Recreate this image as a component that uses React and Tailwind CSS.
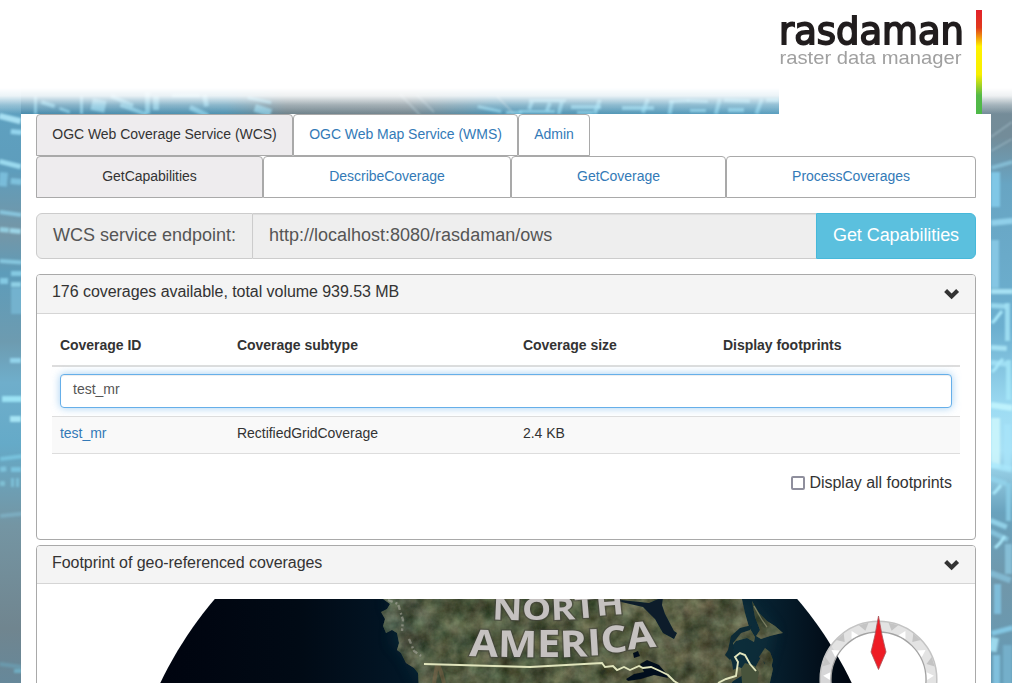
import React from "react";

const tabBase =
  "flex h-[42px] items-center justify-center rounded-t border border-[#a9a9a9] pb-[2px] text-sm leading-5 tracking-[-0.03px]";

function Tab({ width, active, children }) {
  return (
    <a className={`${tabBase} ${width} ${active ? "bg-[#eeecee] text-[#333]" : "bg-white text-[#337ab7]"}`}>
      {children}
    </a>
  );
}

function Chevron() {
  return (
    <svg className="block h-[12px] w-[16px]" viewBox="0 0 16 12">
      <path d="M1.6 2.6 7.6 8.4 13.6 2.6" fill="none" stroke="#333" strokeWidth="4.2" />
    </svg>
  );
}

const leftBars = [
  [0, 113, 22, 6, 14, "#b9efff"], [11, 129, 11, 5, 5, "#a1e2fa"], [0, 159, 22, 5, 14, "#a9e8fb"],
  [0, 172, 8, 14, 5, "#7fc4e2"], [11, 178, 11, 6, 5, "#86cbe6"], [0, 210, 22, 4, 8, "#8dcfe8"],
  [0, 227, 9, 5, 5, "#9bdbee"], [10, 228, 11, 5, 5, "#a6e4f6"], [0, 259, 22, 4, 4, "#8fd2ea"],
  [0, 278, 8, 6, 0, "#8dd5ee"], [11, 271, 11, 5, 0, "#8ed4ec"], [11, 282, 10, 5, 0, "#9adcf0"],
  [11, 288, 11, 26, 0, "#78b8d4"], [10, 358, 11, 5, 0, "#9cdff6"],
  [2, 396, 20, 6, 0, "#a8effe"], [10, 416, 11, 6, 0, "#b5f3ff"], [0, 457, 22, 4, -7, "#7cc9e4"],
  [0, 467, 6, 5, -7, "#84cbe3"], [11, 467, 10, 5, 0, "#80cbe5"], [0, 481, 5, 5, 0, "#83c5da"],
  [11, 478, 3, 9, 0, "#7fc5de"], [16, 478, 3, 9, 0, "#7fc5de"], [0, 514, 22, 4, -6, "#7eb2c5"],
  [0, 662, 22, 4, 8, "#6b9eb2"], [14, 669, 8, 4, 0, "#72b5cc"],
];

const rightBars = [
  [991, 172, 9, 35, 0, "#86d0ef"], [991, 166, 22, 4, -16, "#8bc4dc"], [991, 220, 22, 6, -6, "#9ad9f3"],
  [991, 240, 8, 48, 0, "#8ccdea"], [991, 289, 22, 5, 0, "#b5edfc"], [991, 303, 16, 5, 4, "#a2e1f5"],
  [1005, 303, 5, 38, 0, "#a6e6f8"], [991, 345, 16, 5, 4, "#b0ebfa"], [991, 360, 16, 5, 6, "#a6e5f7"],
  [1006, 360, 5, 40, 0, "#a7e8f9"], [991, 402, 22, 6, 8, "#c7f7ff"], [991, 418, 9, 50, 0, "#d0f8fd"],
  [1004, 424, 7, 45, 0, "#a8e4f9"], [991, 462, 22, 6, 12, "#a9e7fb"], [991, 476, 17, 5, 18, "#93d4ec"],
  [1006, 483, 5, 38, 0, "#8ccfe8"], [991, 518, 18, 5, 22, "#9bdcf2"], [991, 529, 20, 5, 25, "#8bc9e2"],
  [1005, 544, 7, 30, 0, "#8cc7df"], [991, 570, 22, 6, 20, "#87c0d9"], [994, 584, 7, 30, 0, "#83c7e5"],
  [991, 631, 22, 5, -15, "#8bd2ef"], [991, 637, 8, 14, 10, "#a9e8fb"], [993, 655, 7, 30, 0, "#87c9e7"],
  [1003, 645, 9, 40, 0, "#78b4d0"],
];

const topBars = [
  [34, 96, 3, 18, 0], [42, 100, 14, 4, 18], [60, 107, 11, 3, 20], [80, 96, 3, 18, 0], [93, 98, 14, 12, 12],
  [112, 94, 24, 4, 24], [121, 103, 28, 4, 20], [145, 92, 5, 22, 0], [153, 96, 6, 14, 0], [172, 94, 28, 3, 0],
  [191, 105, 20, 5, 25], [202, 95, 5, 12, -10], [248, 96, 24, 3, 12], [256, 104, 17, 8, 18],
  [478, 105, 24, 3, 12], [506, 111, 16, 3, 0], [529, 99, 37, 3, 0], [530, 101, 4, 8, 20],
  [548, 102, 4, 9, 20], [560, 101, 4, 13, 15], [519, 110, 36, 3, 0], [571, 105, 30, 4, 0],
  [598, 99, 4, 15, 20], [577, 111, 16, 3, 0], [622, 106, 32, 4, 0], [646, 98, 4, 15, 20],
  [669, 100, 20, 3, -3], [670, 100, 4, 14, 10], [687, 99, 21, 3, 3], [690, 109, 16, 3, 0],
  [718, 98, 4, 16, 15], [724, 98, 26, 4, 2], [728, 108, 16, 4, 0], [760, 98, 4, 16, 20], [766, 98, 13, 4, 0],
];

function Backdrop() {
  return (
    <svg className="absolute left-0 top-0 h-[683px] w-[1012px]" viewBox="0 0 1012 683">
      <defs>
        <linearGradient id="bgLeft" x1="0" y1="0" x2="0" y2="1">
          <stop offset="0" stopColor="#5fa6c6" />
          <stop offset=".25" stopColor="#5e9dbc" />
          <stop offset=".34" stopColor="#7596a6" />
          <stop offset=".4" stopColor="#5d9cba" />
          <stop offset=".5" stopColor="#6d9bb0" />
          <stop offset=".56" stopColor="#6faecb" />
          <stop offset=".65" stopColor="#65aac8" />
          <stop offset=".77" stopColor="#7495a3" />
          <stop offset=".92" stopColor="#70858f" />
          <stop offset="1" stopColor="#66889a" />
        </linearGradient>
        <linearGradient id="bgRight" x1="0" y1="0" x2="0" y2="1">
          <stop offset="0" stopColor="#7b8c96" />
          <stop offset=".2" stopColor="#738c99" />
          <stop offset=".27" stopColor="#68a5c3" />
          <stop offset=".48" stopColor="#6cafcf" />
          <stop offset=".6" stopColor="#9edcf3" />
          <stop offset=".66" stopColor="#a8e1f6" />
          <stop offset=".75" stopColor="#69a2bd" />
          <stop offset=".86" stopColor="#7097aa" />
          <stop offset="1" stopColor="#649bb6" />
        </linearGradient>
        <linearGradient id="bgTop" x1="0" y1="0" x2="1" y2="0">
          <stop offset="0" stopColor="#4a8cad" />
          <stop offset=".27" stopColor="#4f92b1" />
          <stop offset=".35" stopColor="#70838c" />
          <stop offset=".51" stopColor="#758790" />
          <stop offset=".62" stopColor="#4f92b1" />
          <stop offset="1" stopColor="#5a9fbf" />
        </linearGradient>
        <linearGradient id="fade" x1="0" y1="0" x2="0" y2="1">
          <stop offset="0" stopColor="#fff" />
          <stop offset=".3" stopColor="#fff" stopOpacity=".88" />
          <stop offset=".65" stopColor="#fff" stopOpacity=".35" />
          <stop offset="1" stopColor="#fff" stopOpacity="0" />
        </linearGradient>
        <filter id="soften"><feGaussianBlur stdDeviation=".9" /></filter>
      </defs>
      <rect width="25" height="683" fill="url(#bgLeft)" />
      <rect x="976" width="36" height="683" fill="url(#bgRight)" />
      <rect x="21" y="80" width="758" height="34" fill="url(#bgTop)" />
      <g filter="url(#soften)">
        {leftBars.concat(rightBars).map(([x, y, w, h, a, c], i) => (
          <rect key={i} x={x} y={y} width={w} height={h} fill={c} opacity=".8" transform={`rotate(${a} ${x} ${y})`} />
        ))}
        {topBars.map(([x, y, w, h, a], i) => (
          <rect key={i} x={x} y={y} width={w} height={h} fill="#93dcf4" opacity=".65" transform={`rotate(${a} ${x} ${y})`} />
        ))}
        <path d="m993 329 3-3 3-4 4-5m-10 61 4-4 3-5 4-4m-10 135 4-4 4-5m-6 63 5-5 5-7" transform="translate(-1 -6)" fill="none" stroke="#a9e8fa" strokeWidth="3" />
        <path d="m400 94 20 21m-3-20 17 17m63-16 17 18m477 23 21-15m-21 29 21-12" fill="none" stroke="#b5d0dc" strokeWidth="1.2" opacity=".6" />
      </g>
      <rect width="1012" height="88" fill="#fff" />
      <rect y="88" width="1012" height="26" fill="url(#fade)" />
    </svg>
  );
}

function Logo() {
  return (
    <svg className="h-[114px] w-[203px]" viewBox="779 0 203 114">
      <defs>
        <linearGradient id="spectrum" x1="0" y1="0" x2="0" y2="1">
          <stop offset="0" stopColor="#e3202b" />
          <stop offset=".17" stopColor="#e13a1c" />
          <stop offset=".35" stopColor="#fff200" />
          <stop offset=".62" stopColor="#f7ef00" />
          <stop offset=".82" stopColor="#55b947" />
          <stop offset="1" stopColor="#4db848" />
        </linearGradient>
      </defs>
      <rect x="779" width="203" height="114" fill="#fff" />
      <text x="779" y="43.5" fontFamily="DejaVu Sans, sans-serif" fontSize="38" textLength="185" lengthAdjust="spacingAndGlyphs" fill="#211d1e" stroke="#211d1e" strokeWidth="1.8" strokeLinejoin="miter">rasdaman</text>
      <text x="779.5" y="64" fontFamily="Liberation Sans, sans-serif" fontSize="19" textLength="182" lengthAdjust="spacingAndGlyphs" fill="#a0a0a0">raster data manager</text>
      <rect x="976" y="10" width="6" height="104" fill="url(#spectrum)" />
    </svg>
  );
}

const compassTicks = [-72, -42, -15, 15, 42, 72];

function Globe() {
  return (
    <svg className="block h-[84px] w-[908px]" viewBox="52 599 908 84">
      <defs>
        <clipPath id="disc"><circle cx="506" cy="847.8" r="383" /></clipPath>
        <linearGradient id="ocean" gradientUnits="userSpaceOnUse" x1="160" y1="0" x2="852" y2="0">
          <stop offset="0" stopColor="#00040f" />
          <stop offset=".2" stopColor="#010a15" />
          <stop offset=".35" stopColor="#021626" />
          <stop offset=".75" stopColor="#0b2a38" />
          <stop offset=".88" stopColor="#07202f" />
          <stop offset="1" stopColor="#00050f" />
        </linearGradient>
        <linearGradient id="soil" gradientUnits="userSpaceOnUse" x1="390" y1="0" x2="770" y2="0">
          <stop offset="0" stopColor="#4b5a50" />
          <stop offset=".15" stopColor="#4a593e" />
          <stop offset=".5" stopColor="#525c40" />
          <stop offset=".75" stopColor="#5f6147" />
          <stop offset="1" stopColor="#4b523d" />
        </linearGradient>
        <filter id="terrain" x="0" y="0" width="1" height="1" colorInterpolationFilters="sRGB">
          <feTurbulence type="fractalNoise" baseFrequency=".06" numOctaves="4" seed="8" result="n" />
          <feColorMatrix in="n" type="matrix" values=".8 .2 0 0 -.17  .8 0 0 0 -.05  .7 0 .1 0 -.15  0 0 0 0 .5" result="m" />
          <feComposite in="m" in2="SourceAlpha" operator="in" result="t" />
          <feMerge><feMergeNode in="SourceGraphic" /><feMergeNode in="t" /></feMerge>
        </filter>
        <filter id="blurS"><feGaussianBlur stdDeviation=".6" /></filter>
        <filter id="blurL"><feGaussianBlur stdDeviation="7" /></filter>
      </defs>
      <g clipPath="url(#disc)">
        <rect x="52" y="599" width="908" height="84" fill="url(#ocean)" />
        <path d="M385 599 396 622 390 640 405 657 418 683 760 683 770 650 775 630 750 599Z" fill="#16404a" opacity=".35" filter="url(#blurL)" />
        <g filter="url(#blurS)">
          <path d="M383 590V599l7 5-3 5-6 3 4 7-2 7 3 7 6-3 5 3 2 10 -2 7 4 3 5 10 8 5 4 5 1 18H725l8-10 22-13 6-11 4 8 5-4 3 8-5 22H751l-4-20-8-4-6 3-1-7-4-12 8-10 11-3 7 4 1-5-6-10-4-14-4-18Z" fill="url(#soil)" filter="url(#terrain)" />
          <path d="M752 601l7 12 8 8 8 5 8 7-5 1-8 2-9 3-5-3 4-6-5-13Z" fill="#515842" filter="url(#terrain)" />
          <path d="M765 648l5 4 3 8-4 17-5 5-3-10 4-9-6-6Z" fill="#49533c" filter="url(#terrain)" />
          <path d="M617 595l4 5 28 3 14-6-1 8 3 9 9 17 3 2-3 6-11-6-8-14-12-12-26-6Z" fill="#071f2c" />
          <path d="M728 650l3-14 9-8 12-3-2 5-9 3-8 10 1 12-4 5-5-5Z" fill="#0d2b35" />
          <path d="M742 683l-1-14 4-6 10 3 4 6-2 11Z" fill="#47523a" />
          <path d="M626 679l8-5 10-2-4-8 7-4 12 5 7 8 2 5-14-3-13 4-13 2Zm7-26 5-2 2 5-6 2Z" fill="#05101a" />
          <path d="M388 600l10 4 5 16-1 11m7 8 5 12 7 5" fill="none" stroke="#b5b3a9" strokeWidth="2.4" strokeDasharray="5 3 2 2" opacity=".5" />
          <path d="M438 664l3 8 3 11m-7-18 -3 18" fill="none" stroke="#86674a" strokeWidth="4" opacity=".45" />
          <path d="M754 606l8 14 5 7" fill="none" stroke="#a0a080" strokeWidth="1.3" opacity=".6" />
          <path d="M424 664L530 667 602 663l3 4 8-1 4 4 7-3 6 3 9-4 4 2 8-1 9 4 8 4 6 6 8 5M718 683l8-4 10-3 2-14-3-5 5-4 5 2 5 9 6 7" fill="none" stroke="#e1e5bd" strokeWidth="1.9" />
        </g>
        <g fontFamily="Open Sans, sans-serif" fontWeight="700" fill="#c5c1c0" stroke="#403f39" strokeOpacity=".55" strokeWidth="2.5" paintOrder="stroke" filter="url(#blurS)">
          <text x="492" y="620" fontSize="31" textLength="133" lengthAdjust="spacingAndGlyphs" rotate="2 0 -2 -4 -5" dy="-.5 .5 0 -1.5 -2.5">NORTH</text>
          <text x="469" y="656" fontSize="37" textLength="188" lengthAdjust="spacingAndGlyphs" rotate="2 1 0 -2 -3 -5 -7" dy="0 .8 .5 0 -1.5 -2.5 -3.5">AMERICA</text>
        </g>
      </g>
      <circle cx="878.5" cy="679.5" r="53" fill="none" stroke="#e2e2e2" strokeWidth="11" opacity=".95" />
      <circle cx="878.5" cy="679.5" r="58.3" fill="none" stroke="#c4c4c4" strokeWidth="1.5" />
      <circle cx="878.5" cy="679.5" r="47.5" fill="none" stroke="#a3a3a3" strokeWidth="1.3" />
      {compassTicks.map((a) => (
        <path key={a} d="m873.5 622 5 7 5-7Z" fill="#c4c4c4" transform={`rotate(${a} 878.5 679.5)`} />
      ))}
      {[-86, -58, -29, 29, 58, 86].map((a) => (
        <path key={a} d="m874.5 631 4-7 4 7Z" fill="#fff" transform={`rotate(${a} 878.5 679.5)`} />
      ))}
      <path d="M878.5 616 882 635 886 652 878.5 669.5 871 652 875 635Z" fill="#ee1c25" stroke="#a9555a" strokeWidth=".8" />
    </svg>
  );
}

function Panel({ title, headHeight, className, children }) {
  return (
    <section className={`shrink-0 overflow-hidden rounded border border-[#a9a9a9] bg-white ${className}`}>
      <header className={`flex items-center justify-between border-b border-[#d5d5d5] bg-[#f4f4f4] px-[15px] pb-[4px] text-base ${headHeight}`}>
        <h4 className="tracking-[-0.05px]">{title}</h4>
        <div className="pt-[4px]"><Chevron /></div>
      </header>
      <div className="px-[15px] pt-[15px]">{children}</div>
    </section>
  );
}

export default function App() {
  return (
    <div className="relative h-[683px] w-[1024px] overflow-hidden bg-white font-['Liberation_Sans',Arial,sans-serif] text-[#333]">
      <Backdrop />
      <div className="relative flex h-full flex-col">
        <header className="flex h-[114px] shrink-0 pl-[779px]"><Logo /></header>
        <main className="ml-[21px] flex h-[569px] w-[970px] flex-col bg-white px-[15px]">
          <nav className="flex shrink-0">
            <Tab width="w-[257px]" active>OGC Web Coverage Service (WCS)</Tab>
            <Tab width="w-[225px]">OGC Web Map Service (WMS)</Tab>
            <Tab width="w-[72px]">Admin</Tab>
          </nav>
          <nav className="flex shrink-0">
            <Tab width="w-[227px]" active>GetCapabilities</Tab>
            <Tab width="w-[248px]">DescribeCoverage</Tab>
            <Tab width="w-[215px]">GetCoverage</Tab>
            <Tab width="w-[250px]">ProcessCoverages</Tab>
          </nav>

          <div className="mt-[15px] flex h-[46px] shrink-0 text-lg text-[#555]">
            <div className="flex w-[217px] items-center rounded-l-md border border-[#ccc] bg-[#eee] pb-[2px] pl-4">WCS service endpoint:</div>
            <div className="flex w-[563px] items-center border-y border-[#ccc] bg-[#eee] pb-[2px] pl-4 shadow-[inset_0_1px_1px_rgba(0,0,0,0.075)]">http://localhost:8080/rasdaman/ows</div>
            <button className="flex w-[160px] items-center justify-center rounded-r-md border border-[#46b8da] bg-[#5bc0de] pb-[2px] tracking-[-0.06px] text-white">Get Capabilities</button>
          </div>

          <Panel title="176 coverages available, total volume 939.53 MB" headHeight="h-[39px]" className="mt-[15px] h-[266px]">
            <div className="grid h-[38px] grid-cols-[177px_286px_200px_245px] items-center border-b-2 border-[#ddd] text-sm font-bold tracking-[-0.03px]">
              <div className="pb-[4px] pl-2">Coverage ID</div>
              <div className="pb-[4px] pl-2">Coverage subtype</div>
              <div className="pb-[4px] pl-2">Coverage size</div>
              <div className="pb-[4px] pl-2">Display footprints</div>
            </div>
            <div className="h-[49px] px-2 pt-[7px]">
              <div className="flex h-[34px] items-center rounded border border-[#66afe9] bg-white pb-[4px] pl-3 text-sm text-[#555] shadow-[inset_0_1px_1px_rgba(0,0,0,0.075),0_0_8px_rgba(102,175,233,0.6)]">test_mr</div>
            </div>
            <div className="grid h-[38px] grid-cols-[177px_286px_445px] items-center border-y border-[#ddd] bg-[#f9f9f9] pb-[4px] text-sm tracking-[-0.03px]">
              <a className="pl-2 text-[#337ab7]">test_mr</a>
              <div className="pl-2">RectifiedGridCoverage</div>
              <div className="pl-2">2.4 KB</div>
            </div>
            <label className="mt-[17px] flex items-center justify-end gap-[4px] pr-2 text-base tracking-[-0.03px]">
              <span className="h-[14px] w-[14px] rounded-[2px] border-2 border-[#8f8f9d] bg-white" />
              Display all footprints
            </label>
          </Panel>

          <Panel title="Footprint of geo-referenced coverages" headHeight="h-[38px]" className="mt-[5px] h-[160px]">
            <Globe />
          </Panel>
        </main>
      </div>
    </div>
  );
}
